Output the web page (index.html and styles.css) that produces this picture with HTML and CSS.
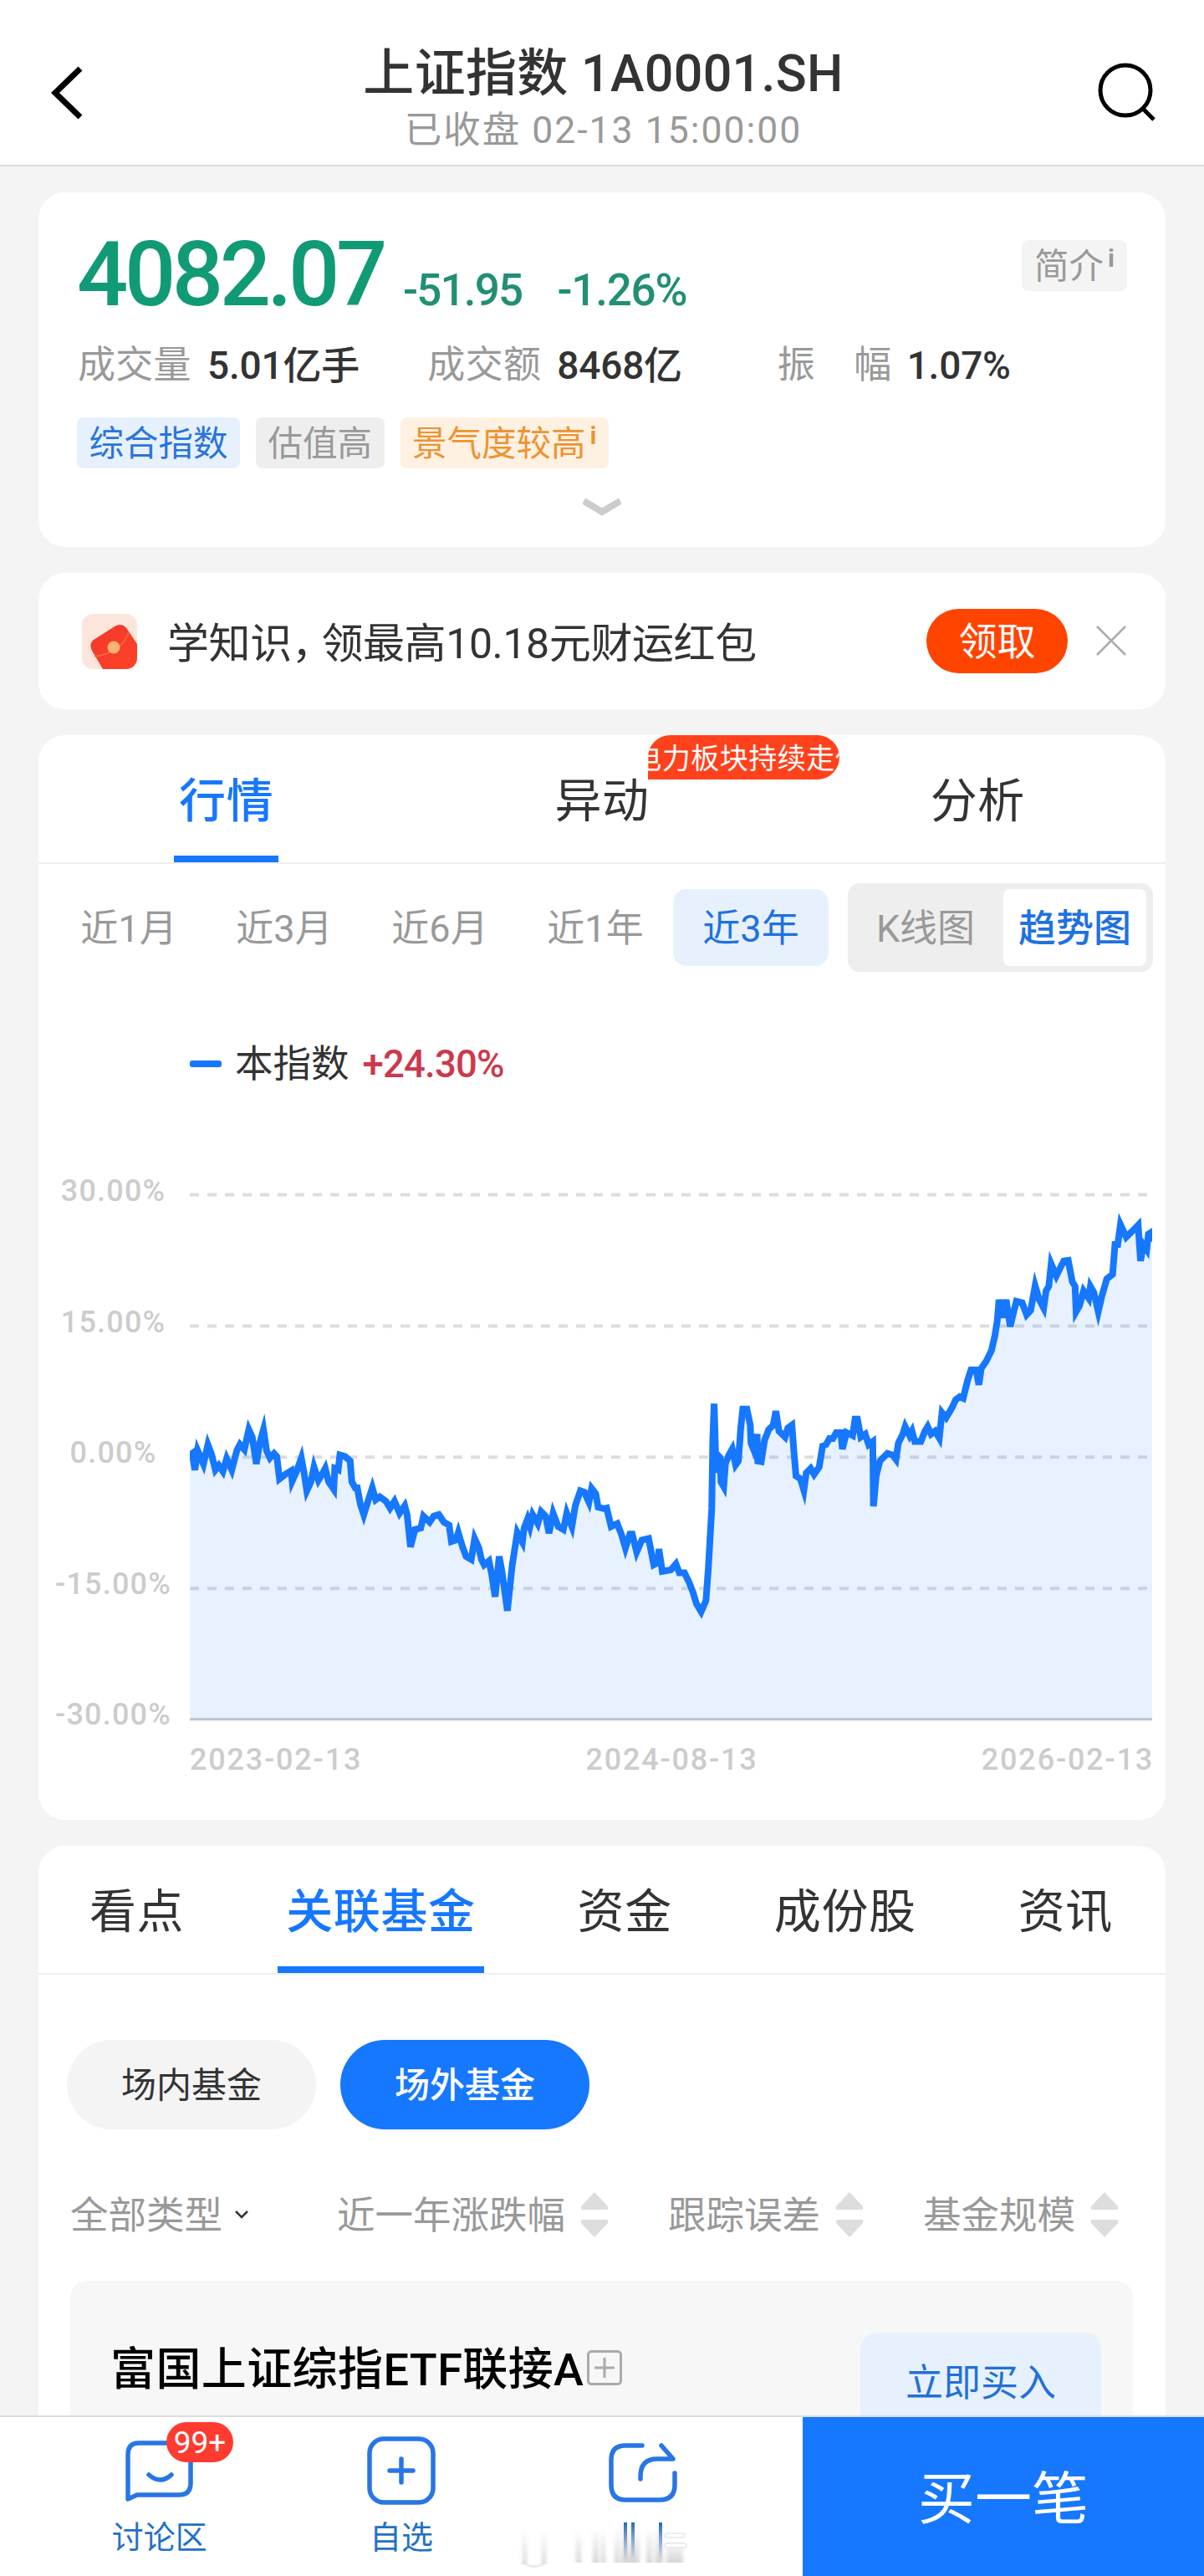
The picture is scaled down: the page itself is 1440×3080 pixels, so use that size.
FILE: index.html
```
<!DOCTYPE html>
<html lang="zh-CN">
<head>
    <meta charset="UTF-8">
    <meta name="viewport" content="width=device-width, initial-scale=1.0">
    <title>上证指数 1A0001.SH</title>
    <link rel="stylesheet" href="styles.css">
</head>
<body>
    <div class="page">
        <header class="header">
            <svg class="back" viewBox="0 0 44 66"><path d="M39 4 L9 33 L39 62"/></svg>
            <div class="header-text">
                <h1>上证指数 1A0001.SH</h1>
                <p>已收盘 02-13 15:00:00</p>
            </div>
            <svg class="search" viewBox="0 0 72 72"><circle cx="34" cy="34" r="30"/><path d="M55 56 L68 69"/></svg>
        </header>

        <main class="main">
            <section class="card quote">
                <div class="price-row">
                    <span class="price">4082.07</span>
                    <span class="change">-51.95</span>
                    <span class="change percent">-1.26%</span>
                    <span class="tag tag-intro">简介<sup>i</sup></span>
                </div>
                <div class="stats">
                    <div><span class="label">成交量</span><span class="value">5.01亿手</span></div>
                    <div><span class="label">成交额</span><span class="value">8468亿</span></div>
                    <div><span class="label wide"><i>振</i><i>幅</i></span><span class="value">1.07%</span></div>
                </div>
                <div class="tags">
                    <span class="tag tag-blue">综合指数</span>
                    <span class="tag tag-gray">估值高</span>
                    <span class="tag tag-orange">景气度较高<sup>i</sup></span>
                </div>
                <svg class="expand" viewBox="0 0 46 24"><path d="M1 4 L23 17 L45 4"/></svg>
            </section>

            <section class="card promo">
                <svg class="packet" viewBox="0 0 66 66">
                    <defs>
                        <linearGradient id="red" x1="0" y1="0" x2="1" y2="1">
                            <stop offset="0" stop-color="#f0382f"/>
                            <stop offset="1" stop-color="#ff4326"/>
                        </linearGradient>
                        <clipPath id="round"><rect width="66" height="66" rx="13"/></clipPath>
                    </defs>
                    <g clip-path="url(#round)">
                        <rect width="66" height="66" fill="#fce6dc"/>
                        <path d="M14 31 L39 15 Q48 10 54 18 L66 36 V66 H25 L12 44 Q8 36 14 31 Z" fill="url(#red)"/>
                        <path d="M15 51 Q48 46 56 22" fill="none" stroke="#ff6a48" stroke-width="1.5"/>
                        <circle cx="38" cy="40" r="7.5" fill="#ffb271"/>
                    </g>
                </svg>
                <span class="promo-text">学知识<i>，</i>领最高10.18元财运红包</span>
                <button class="get">领取</button>
                <svg class="close" viewBox="0 0 38 38"><path d="M2 2 L36 36 M36 2 L2 36"/></svg>
            </section>

            <section class="card chart-card">
                <nav class="tabs tabs-three">
                    <a class="tab active">行情</a>
                    <a class="tab">异动<span class="bubble"><span>电力板块持续走低</span></span></a>
                    <a class="tab">分析</a>
                </nav>
                <div class="range">
                    <span>近1月</span>
                    <span>近3月</span>
                    <span>近6月</span>
                    <span>近1年</span>
                    <span class="active">近3年</span>
                    <div class="switch">
                        <span>K线图</span>
                        <span class="on">趋势图</span>
                    </div>
                </div>
                <div class="legend"><i class="dash"></i><span>本指数</span><b>+24.30%</b></div>
                <div class="chart">
                    <div class="y-axis">
                        <span>30.00%</span>
                        <span>15.00%</span>
                        <span>0.00%</span>
                        <span>-15.00%</span>
                        <span>-30.00%</span>
                    </div>
                    <svg class="plot" viewBox="65 60 2821 1782" preserveAspectRatio="none">
                        <g class="grid">
                            <path d="M65 78 H2886"/>
                            <path d="M65 518 H2886"/>
                            <path d="M65 957 H2886"/>
                            <path d="M65 1397 H2886"/>
                        </g>
                        <path class="base" d="M65 1836 H2886"/>
                        <polygon id="area" class="area"/>
                        <polyline id="line" class="line"/>
                    </svg>
                </div>
                <div class="x-axis">
                    <span>2023-02-13</span>
                    <span>2024-08-13</span>
                    <span>2026-02-13</span>
                </div>
            </section>

            <section class="card funds">
                <nav class="tabs">
                    <a class="tab">看点</a>
                    <a class="tab active">关联基金</a>
                    <a class="tab">资金</a>
                    <a class="tab">成份股</a>
                    <a class="tab">资讯</a>
                </nav>
                <div class="pills">
                    <span class="pill">场内基金</span>
                    <span class="pill active">场外基金</span>
                </div>
                <div class="filters">
                    <span class="type">全部类型<svg class="down" viewBox="0 0 16 10"><path d="M1 1 L8 8 L15 1"/></svg></span>
                    <span>近一年涨跌幅<svg class="sort" viewBox="0 0 32 54"><path d="M16 0 L32 17 V21 H0 V17 Z M0 33 H32 V37 L16 54 L0 37 Z"/></svg></span>
                    <span>跟踪误差<svg class="sort" viewBox="0 0 32 54"><path d="M16 0 L32 17 V21 H0 V17 Z M0 33 H32 V37 L16 54 L0 37 Z"/></svg></span>
                    <span>基金规模<svg class="sort" viewBox="0 0 32 54"><path d="M16 0 L32 17 V21 H0 V17 Z M0 33 H32 V37 L16 54 L0 37 Z"/></svg></span>
                </div>
                <div class="fund">
                    <span class="fund-name">富国上证综指ETF联接A</span>
                    <svg class="add" viewBox="0 0 42 42"><rect x="1.5" y="1.5" width="39" height="39" rx="4"/><path d="M21 9 V33 M9 21 H33"/></svg>
                    <button class="buy">立即买入</button>
                </div>
            </section>
        </main>

        <footer class="footer">
            <div class="actions">
                <div class="action">
                    <svg viewBox="0 0 82 82"><path d="M16 8 H64 Q78 8 78 22 V56 Q78 70 64 70 H14 L3 75 V22 Q3 8 16 8 Z M28 46 Q42 58 55 46"/></svg>
                    <span>讨论区</span>
                    <em class="badge">99+</em>
                </div>
                <div class="action">
                    <svg viewBox="0 0 82 82"><rect x="3" y="3" width="76" height="76" rx="17"/><path d="M41 27 V55 M27 41 H55"/></svg>
                    <span>自选</span>
                </div>
                <div class="action">
                    <svg viewBox="0 0 82 82"><path d="M40 11 H20 Q3 11 3 28 V58 Q3 76 20 76 H61 Q79 76 79 58 V44 M38 51 V48 Q38 27 58 27 H77 L63 11"/></svg>
                    <svg class="smudge" viewBox="0 0 210 56">
                        <defs>
                            <linearGradient id="fadeBlue" x1="0" y1="0" x2="0" y2="1">
                                <stop offset="0" stop-color="#2867b2"/>
                                <stop offset="1" stop-color="#2867b2" stop-opacity="0"/>
                            </linearGradient>
                            <linearGradient id="fadeGray" x1="0" y1="0" x2="0" y2="1">
                                <stop offset="0" stop-color="#999" stop-opacity="0"/>
                                <stop offset="1" stop-color="#999" stop-opacity=".4"/>
                            </linearGradient>
                            <filter id="soft"><feGaussianBlur stdDeviation="2 0.6"/></filter>
                        </defs>
                        <g filter="url(#soft)" fill="url(#fadeGray)">
                            <rect x="8" y="8" width="5" height="42"/>
                            <rect x="31" y="8" width="5" height="42"/>
                            <rect x="72" y="8" width="6" height="40"/>
                            <rect x="92" y="6" width="7" height="42"/>
                            <rect x="102" y="6" width="5" height="42"/>
                            <rect x="118" y="6" width="6" height="42"/>
                            <rect x="126" y="4" width="22" height="44"/>
                            <rect x="156" y="6" width="7" height="42"/>
                            <rect x="166" y="4" width="10" height="44"/>
                            <rect x="180" y="20" width="20" height="28"/>
                            <path d="M10 48 L22 52 L34 48 V51 L22 54 L10 51 Z"/>
                        </g>
                        <g fill="#fff" stroke="#ddd" stroke-width="1">
                            <rect x="178" y="13" width="24" height="5" rx="2.5"/>
                            <rect x="178" y="25" width="26" height="5" rx="2.5"/>
                        </g>
                        <g fill="url(#fadeBlue)">
                            <rect x="129" y="0" width="4" height="45"/>
                            <rect x="138" y="0" width="4" height="45"/>
                            <rect x="171" y="0" width="4" height="45"/>
                        </g>
                    </svg>
                </div>
            </div>
            <button class="buy-now">买一笔</button>
        </footer>
    </div>

    <script>
        // x,y pairs in plot units
        const points = `66,950 72,945 80,1000 88,935 105,980 118,915 128,945 140,1000 150,985 162,1005 173,962 188,1000 203,935 212,915 225,932
            238,865 248,890 260,980 270,910 281,865 290,935 300,960 312,945 320,955 328,1030 345,1015 362,1003 365,1038 378,1005 392,960
            400,1010 408,1070 420,1040 429,990 442,1035 455,1010 462,995 472,1040 487,1065 490,995 500,1000 505,950 520,955 535,970
            540,1040 550,1060 556,1060 565,1115 575,1150 590,1095 600,1060 610,1100 622,1090 640,1105 652,1128 665,1105 680,1145 695,1120
            702,1150 712,1258 725,1200 742,1195 750,1155 768,1175 780,1155 795,1150 810,1175 825,1185 832,1240 845,1235 852,1210
            865,1260 875,1290 890,1300 900,1230 912,1260 920,1300 928,1318 942,1305 950,1350 960,1425 972,1290 980,1340 996,1472
            1010,1320 1025,1210 1040,1242 1045,1195 1055,1165 1062,1190 1070,1150 1085,1180 1095,1140 1108,1155 1118,1212 1130,1145
            1145,1190 1160,1200 1170,1145 1185,1190 1195,1120 1210,1070 1222,1075 1235,1108 1243,1062 1255,1080 1262,1125 1280,1130
            1287,1128 1300,1190 1318,1180 1330,1215 1342,1262 1355,1215 1362,1215 1375,1275 1390,1235 1410,1230 1425,1318 1438,1310
            1440,1265 1450,1340 1475,1335 1490,1315 1500,1345 1515,1345 1528,1375 1540,1410 1550,1448 1564,1475 1578,1438 1585,1330
            1595,1130 1598,900 1602,778 1608,1010 1612,950 1620,960 1622,1040 1630,1056 1635,980 1645,950 1655,930 1665,983 1673,970
            1680,860 1686,796 1698,796 1708,850 1710,910 1720,938 1728,880 1730,970 1740,972 1750,900 1762,865 1775,850 1783,803
            1792,870 1810,890 1818,860 1830,850 1836,940 1842,1020 1855,1030 1865,1068 1872,1010 1885,995 1895,1015 1910,990
            1920,920 1930,915 1940,895 1950,895 1960,875 1973,875 1978,930 1990,875 2008,885 2015,830 2022,830 2032,890 2045,880
            2055,915 2067,905 2069,1122 2077,1020 2088,970 2110,945 2125,950 2135,965 2142,910 2155,880 2162,855 2175,885 2182,870
            2190,905 2208,905 2220,870 2228,855 2238,880 2250,870 2262,893 2270,808 2282,825 2300,790 2310,765 2322,755 2332,760
            2345,700 2355,665 2370,665 2378,715 2385,660 2400,635 2415,600 2425,550 2432,500 2437,430 2448,490 2458,430 2470,520
            2478,480 2488,435 2505,440 2518,480 2530,465 2543,383 2555,430 2568,458 2575,400 2583,385 2590,310 2605,350 2618,320
            2627,300 2640,298 2652,370 2660,385 2663,470 2673,450 2685,400 2700,425 2705,385 2715,405 2728,470 2738,420 2753,360
            2770,345 2777,245 2785,245 2793,178 2810,220 2828,200 2845,180 2852,300 2860,245 2870,262 2875,210 2885,203 2886,235`;

        document.getElementById('line').setAttribute('points', points);
        document.getElementById('area').setAttribute('points', `66,1836 ${points} 2886,1836`);
    </script>
</body>
</html>
```
FILE: styles.css
```
* {
    box-sizing: border-box;
    margin: 0;
    padding: 0;
}
body {
    font-family: Roboto, "Noto Sans CJK SC", sans-serif;
    background: #f4f4f4;
    color: #333;
}
svg {
    display: block;
    flex: none;
    fill: none;
}
button {
    border: none;
    font-family: inherit;
}
.page {
    width: 1440px;
    height: 3080px;
    display: flex;
    flex-direction: column;
    overflow: hidden;
}

/* header */
.header {
    height: 199px;
    flex: none;
    display: flex;
    justify-content: space-between;
    align-items: flex-start;
    padding: 0 56px 0 57px;
    background: #fff;
    border-bottom: 2px solid #dcdcdc;
}
.back {
    width: 44px;
    height: 66px;
    margin-top: 78px;
    stroke: #000;
    stroke-width: 7;
}
.search {
    width: 72px;
    height: 72px;
    margin-top: 74px;
    stroke: #000;
    stroke-width: 5;
}
.header-text {
    text-align: center;
    padding: 52px 0 0 30px;
}
h1 {
    font-size: 61px;
    line-height: 72px;
    font-weight: 500;
    letter-spacing: 0.3px;
}
.header-text p {
    font-size: 44.5px;
    line-height: 52px;
    margin-top: 6px;
    letter-spacing: 2px;
    color: #999;
}

/* cards */
.main {
    flex: 1;
    min-height: 0;
    overflow: hidden;
    display: flex;
    flex-direction: column;
    gap: 31px;
    padding: 31px 46px 0;
}
.card {
    flex: none;
    background: #fff;
    border-radius: 32px;
}

/* quote */
.quote {
    height: 424px;
    padding: 43px 46px 0;
}
.price-row {
    height: 108px;
    display: flex;
    align-items: baseline;
    color: #119a76;
    line-height: 110px;
}
.price {
    font-size: 108px;
    font-weight: 500;
    letter-spacing: -4.5px;
    width: 390px;
}
.change {
    font-size: 53px;
    font-weight: 500;
    letter-spacing: -1.8px;
    color: #218f73;
}
.percent {
    margin-left: 42px;
    letter-spacing: -1.2px;
}
.tag {
    height: 61px;
    line-height: 63px;
    border-radius: 8px;
    font-size: 41.5px;
    padding: 0 15px;
    white-space: nowrap;
}
.tag sup {
    display: inline-block;
    font-size: 30px;
    font-weight: 700;
    line-height: 30px;
    vertical-align: 14px;
    margin-left: 5px;
}
.tag-intro {
    align-self: flex-start;
    margin: 14px 0 0 auto;
    background: #f4f4f4;
    color: #999;
}
.stats {
    display: grid;
    grid-template-columns: repeat(3, 1fr);
    margin: 28px 0 0 1px;
    font-size: 45px;
    line-height: 56px;
}
.stats div {
    display: flex;
}
.label {
    width: 137px;
    margin-right: 18px;
    color: #999;
    letter-spacing: 0.3px;
}
.label.wide {
    display: flex;
    justify-content: space-between;
}
.label i {
    font-style: normal;
}
.value {
    font-size: 46px;
    font-weight: 500;
    letter-spacing: -0.2px;
}
.tags {
    display: flex;
    gap: 19px;
    margin-top: 34px;
}
.tags .tag {
    padding: 0 14.5px;
}
.tag-blue {
    background: #e7f1fe;
    color: #2a74dc;
}
.tag-gray {
    background: #eee;
    color: #999;
}
.tag-orange {
    background: #fff1e2;
    color: #ee9331;
}
.expand {
    width: 46px;
    height: 24px;
    margin: 35px auto 0;
    stroke: #ccc;
    stroke-width: 8;
}

/* promo */
.promo {
    height: 163px;
    display: flex;
    align-items: center;
    padding: 0 46px 0 52px;
}
.packet {
    width: 66px;
    height: 66px;
}
.promo-text {
    margin: -4px 0 0 36px;
    font-size: 50px;
    letter-spacing: -0.4px;
}
.promo-text i {
    font-style: normal;
    margin-right: -14px;
}
.get {
    width: 169px;
    height: 77px;
    margin-left: auto;
    border-radius: 39px;
    background: #ff4400;
    color: #fff;
    font-size: 46px;
    line-height: 79px;
    font-weight: 400;
}
.close {
    width: 38px;
    height: 38px;
    margin: -2px 0 0 33px;
    stroke: #aaa;
    stroke-width: 2.5;
}

/* tabs */
.tabs {
    height: 154px;
    display: flex;
    border-bottom: 2px solid #eee;
}
.tab {
    position: relative;
    height: 152px;
    padding: 0 61px;
    font-size: 56px;
    line-height: 159px;
    letter-spacing: 0.6px;
    white-space: nowrap;
}
.tabs-three .tab {
    flex: 1;
    padding: 0;
    text-align: center;
}
.tab.active {
    color: #1677ff;
    font-weight: 500;
}
.tab.active::after {
    content: "";
    position: absolute;
    left: 51px;
    right: 51px;
    bottom: 0;
    height: 8px;
    background: #1677ff;
}
.tabs-three .tab.active::after {
    left: 162px;
    right: 162px;
}
.bubble {
    position: absolute;
    left: 280px;
    top: 0;
    width: 229px;
    height: 53px;
    border-radius: 27px 27px 27px 0;
    background: #ff411c;
    color: #fff;
    font-size: 34px;
    line-height: 56px;
    letter-spacing: 0.5px;
    overflow: hidden;
    text-align: left;
}
.bubble span {
    margin-left: -18px;
}

/* chart */
.chart-card {
    height: 1297px;
}
.range {
    display: flex;
    align-items: center;
    height: 106px;
    margin: 23px 15px 0 15px;
    font-size: 45px;
    color: #999;
}
.range > span {
    width: 186px;
    height: 92px;
    line-height: 95px;
    text-align: center;
}
.range > .active {
    background: #e7f1fe;
    color: #1f71e0;
    border-radius: 16px;
}
.switch {
    display: flex;
    width: 365px;
    height: 106px;
    margin-left: auto;
    padding: 7px 8px 7px 0;
    background: #eee;
    border-radius: 14px;
}
.switch span {
    flex: 1;
    line-height: 95px;
    text-align: center;
}
.switch .on {
    flex: none;
    width: 171px;
    border-radius: 8px;
    background: #fff;
    color: #1f71e0;
    font-weight: 500;
}
.legend {
    display: flex;
    align-items: center;
    margin: 81px 0 0 181px;
    font-size: 45.5px;
    line-height: 60px;
}
.legend .dash {
    width: 38px;
    height: 8px;
    margin: -3px 16px 0 0;
    border-radius: 3px;
    background: #1677ff;
}
.legend b {
    margin-left: 16px;
    font-weight: 500;
    letter-spacing: -0.8px;
    color: #cb3a4b;
}
.chart {
    display: flex;
    height: 670px;
    margin-top: 102px;
}
.y-axis {
    width: 181px;
    display: flex;
    flex-direction: column;
    justify-content: space-between;
    height: 664px;
    text-align: center;
    font-size: 36px;
    line-height: 38px;
    font-weight: 500;
    letter-spacing: 1.2px;
    color: #ccc;
    padding-right: 2px;
}
.plot {
    width: 1151px;
    height: 636px;
    margin-top: 17px;
    overflow: hidden;
}
.plot * {
    vector-effect: non-scaling-stroke;
}
.grid {
    stroke: #ddd;
    stroke-width: 4;
    stroke-dasharray: 11 10;
}
.base {
    stroke: #c4c9d0;
    stroke-width: 3;
}
.area {
    fill: rgba(22, 119, 255, 0.1);
}
.line {
    stroke: #1677ff;
    stroke-width: 8;
    stroke-miterlimit: 5;
}
.x-axis {
    display: flex;
    justify-content: space-between;
    margin: 8px 14px 0 181px;
    font-size: 36px;
    line-height: 42px;
    font-weight: 500;
    letter-spacing: 1.8px;
    color: #ccc;
}

/* funds */
.funds {
    height: 900px;
}
.pills {
    display: flex;
    gap: 29px;
    margin: 78px 0 0 34px;
}
.pill {
    width: 298px;
    height: 107px;
    border-radius: 54px;
    background: #f4f4f4;
    text-align: center;
    font-size: 42px;
    line-height: 109px;
}
.pill.active {
    background: #1677ff;
    color: #fff;
    font-weight: 500;
}
.filters {
    display: flex;
    gap: 72px;
    height: 60px;
    margin: 72px 0 0 38px;
    font-size: 45.5px;
    line-height: 60px;
    color: #999;
}
.filters span {
    display: flex;
    align-items: center;
    padding-top: 3px;
}
.filters .type {
    margin-right: 34px;
}
.down {
    width: 16px;
    height: 10px;
    margin: -3px 0 0 15px;
    stroke: #333;
    stroke-width: 2.5;
}
.sort {
    width: 32px;
    height: 54px;
    margin: -3px 0 0 19px;
    fill: #ddd;
}
.fund {
    display: flex;
    align-items: flex-start;
    height: 300px;
    margin: 49px 39px 0 38px;
    padding: 62px 38px 0 48px;
    border-radius: 20px;
    background: #f7f7f7;
}
.fund-name {
    margin-top: 13px;
    font-size: 54px;
    line-height: 64px;
    font-weight: 500;
    letter-spacing: 0.4px;
    color: #000;
}
.add {
    width: 42px;
    height: 42px;
    margin: 21px 0 0 4px;
    stroke: #aaa;
    stroke-width: 3;
}
.buy {
    width: 288px;
    height: 120px;
    margin-left: auto;
    border-radius: 20px;
    background: #e7f1fe;
    color: #2370d8;
    font-size: 45px;
    line-height: 122px;
}

/* footer */
.footer {
    flex: none;
    height: 192px;
    display: flex;
    background: #fff;
    border-top: 2px solid #ddd;
}
.actions {
    width: 960px;
    display: flex;
    padding: 0 46px;
}
.action {
    flex: 1;
    position: relative;
    display: flex;
    flex-direction: column;
    align-items: center;
    padding-top: 23px;
    font-size: 38px;
    line-height: 46px;
    color: #2370c8;
}
.action svg {
    width: 82px;
    height: 82px;
    stroke: #2876e4;
    stroke-width: 5.5;
    stroke-linecap: round;
    stroke-linejoin: round;
}
.action span {
    margin-top: 16px;
}
.badge {
    position: absolute;
    left: 153px;
    top: 6px;
    width: 80px;
    height: 48px;
    border-radius: 24px;
    background: #ff3b30;
    color: #fff;
    font-size: 37px;
    line-height: 50px;
    font-style: normal;
    text-align: center;
}
.action .smudge {
    width: 210px;
    height: 56px;
    margin: 21px 0 0 -94px;
    stroke: none;
}
.buy-now {
    flex: 1;
    padding-top: 4px;
    background: #1677ff;
    color: #fff;
    font-size: 68px;
    line-height: 190px;
}
```
